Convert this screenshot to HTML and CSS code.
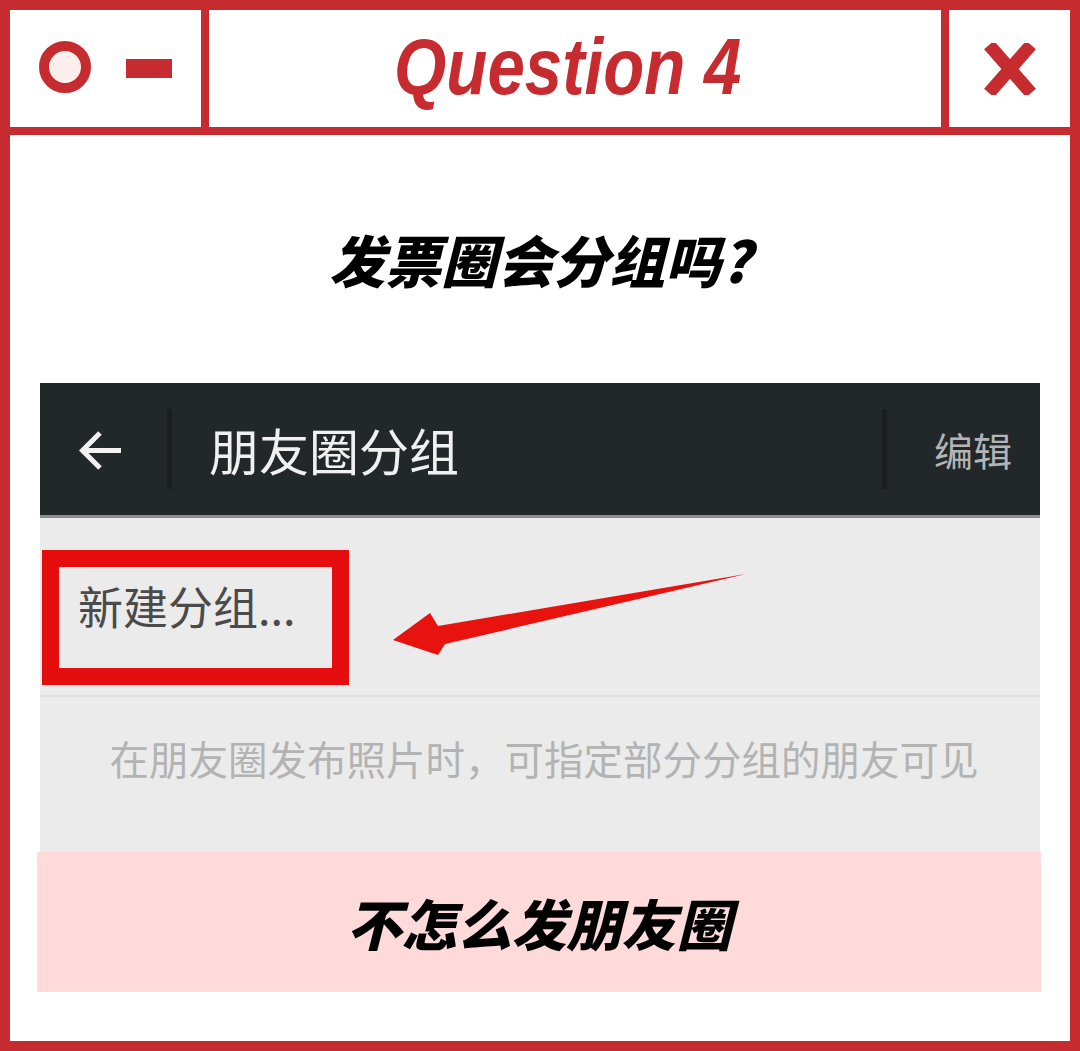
FILE: index.html
```html
<!DOCTYPE html>
<html lang="zh-CN">
<head>
  <meta charset="UTF-8" />
  <meta name="viewport" content="width=device-width, initial-scale=1.0"/>
  <title>Question 4</title>
  <link rel="stylesheet" href="styles.css">
</head>
<body>
  <div class="window">
    <header class="titlebar">
      <div class="controls">
        <span class="dot"></span>
        <span class="dash"></span>
      </div>
      <div class="title"><span>Question 4</span></div>
      <div class="close">
        <svg width="52" height="52" viewBox="0 0 52 52">
          <path d="M5 2 L47 50 M47 2 L5 50" stroke="#c62b30" stroke-width="13" fill="none"/>
        </svg>
      </div>
    </header>

    <main class="content">
      <h1 class="question">发票圈会分组吗?</h1>

      <div class="shot">
        <div class="shot-bar">
          <svg class="back" width="45" height="45" viewBox="0 0 45 45">
            <path d="M43 22.5 H5 M22 5 L4.5 22.5 L22 40" stroke="#f2f2f2" stroke-width="5" fill="none"/>
          </svg>
          <span class="bar-sep"></span>
          <span class="bar-title">朋友圈分组</span>
          <span class="bar-sep right"></span>
          <span class="bar-edit">编辑</span>
        </div>
        <div class="shot-body">
          <div class="new-row">
            <div class="new-box">新建分组...</div>
          </div>
          <p class="hint">在朋友圈发布照片时，可指定部分分组的朋友可见</p>
          <!-- red pointer drawn over the screenshot -->
          <svg class="pointer" width="1000" height="334" viewBox="0 0 1000 334">
            <polygon points="353,122 390,95 398,108 706,56 405,126 398,137" fill="#e8120f"/>
          </svg>
        </div>
      </div>

      <div class="answer">不怎么发朋友圈</div>
    </main>
  </div>
</body>
</html>
```

FILE: styles.css
```css
* {
  margin: 0;
  padding: 0;
  box-sizing: border-box;
}
body {
  background-color: white;
  font-family: "Noto Sans CJK SC", "Noto Sans", sans-serif;
}
.window {
  width: 1080px;
  height: 1051px;
  border: 10px solid #c62b30;
  background: white;
}
.titlebar {
  display: flex;
  height: 125px;
  border-bottom: 8px solid #c62b30;
}
.controls {
  width: 199px;
  border-right: 8px solid #c62b30;
  display: flex;
  align-items: center;
  gap: 35px;
  padding-left: 29px;
}
.dot {
  width: 52px;
  height: 52px;
  border-radius: 50%;
  border: 10px solid #c62b30;
  background: #fdeeee;
  margin-top: -3px;
}
.dash {
  width: 46px;
  height: 19px;
  background: #c62b30;
}
.title {
  flex: 1;
  display: flex;
  align-items: center;
  justify-content: center;
}
.title span {
  display: inline-block;
  font-family: "Liberation Sans", Arial, sans-serif;
  font-weight: bold;
  font-style: italic;
  font-size: 80px;
  line-height: 1;
  color: #c62b30;
  transform: scaleX(0.84);
  margin-left: -14px;
  margin-top: -4px;
}
.close {
  width: 129px;
  border-left: 8px solid #c62b30;
  display: flex;
  align-items: center;
  justify-content: center;
}
.content {
  display: flex;
  flex-direction: column;
}
.question {
  height: 248px;
  display: flex;
  align-items: center;
  justify-content: center;
  font-size: 56px;
  font-weight: 900;
  font-style: italic;
  color: black;
  line-height: 1;
}
.shot {
  margin: 0 30px;
}
.shot-bar {
  height: 135px;
  background: #222729;
  border-bottom: 3px solid #8c8f90;
  display: flex;
  align-items: center;
  padding: 0 28px 0 38px;
}
.back {
  margin-top: 2px;
}
.bar-sep {
  width: 5px;
  height: 80px;
  background: #1a1e20;
  margin-left: 44px;
}
.bar-sep.right {
  margin-left: auto;
}
.bar-title {
  margin-left: 37px;
  font-size: 50px;
  line-height: 1;
  color: #f0f0f0;
}
.bar-edit {
  margin-left: 47px;
  font-size: 39px;
  line-height: 1;
  color: #b4b4b4;
}
.shot-body {
  position: relative;
  height: 334px;
  background: #ebebeb;
}
.new-row {
  height: 179px;
  padding: 32px 0 0 2px;
  border-bottom: 2px solid #dedede;
}
.new-box {
  width: 307px;
  height: 135px;
  border: 17px solid #e50d0d;
  padding: 16px 0 0 19px;
  font-size: 45px;
  line-height: 1;
  color: #4a4a4a;
}
.hint {
  margin-top: 41px;
  text-align: center;
  font-size: 39.5px;
  line-height: 1;
  color: #b3b3b3;
  padding-left: 8px;
}
.pointer {
  position: absolute;
  left: 0;
  top: 0;
}
.answer {
  margin: 0 29px 0 27px;
  height: 140px;
  background: #ffdada;
  display: flex;
  align-items: center;
  justify-content: center;
  font-size: 55px;
  font-weight: 900;
  font-style: italic;
  line-height: 1;
  color: black;
}
```
